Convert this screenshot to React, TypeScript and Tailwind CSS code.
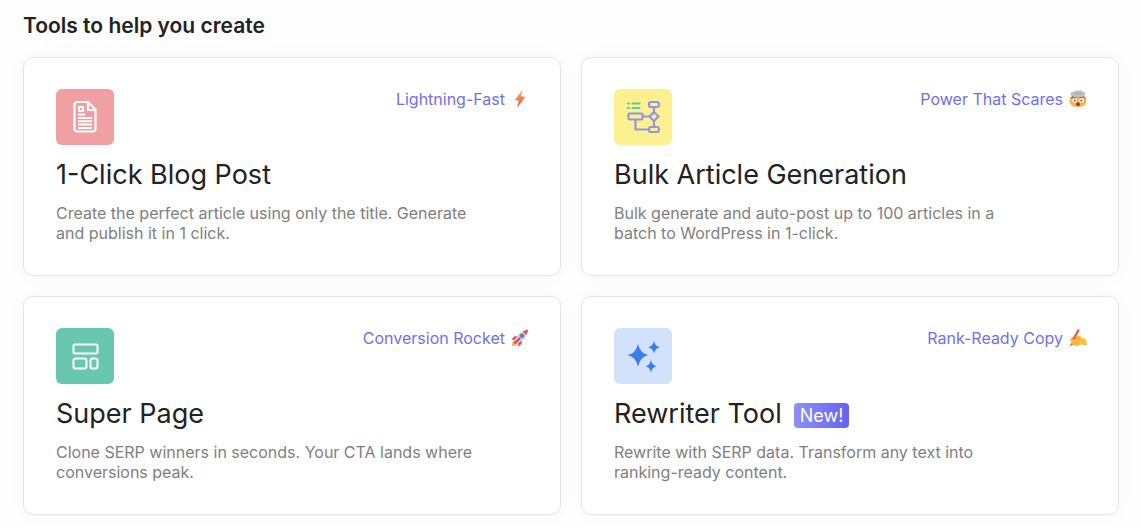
import { FC, ReactNode } from 'react';

type Tool = {
    title: string
    text: string
    tag: string
    color: string
    icon: ReactNode
    emoji: ReactNode
    isNew?: boolean
}

const PostIcon: FC = () => (
    <svg width="26" height="34" viewBox="0 0 26 34" fill="none" stroke="white">
        <path d="M4.500 2h11.500l7.500 7.500V29a2.500 2.500 0 0 1-2.500 2.500H5A2.500 2.500 0 0 1 2.500 29V4.500A2.500 2.500 0 0 1 4.500 2Z" strokeWidth="2.200" strokeLinejoin="round" />
        <path d="M16 3v7H22.500" strokeWidth="2.200" />
        <rect x="7" y="7" width="4" height="4" strokeWidth="2" />
        <path d="M6 14.500h7M6 18h14M6 21.300h14M6 24.600h14M6 28h14" strokeWidth="2" />
    </svg>
)

const FlowIcon: FC = () => (
    <svg width="34" height="34" viewBox="0 0 34 34" fill="none" strokeWidth="2.200">
        <path d="M2 3.500h1M2 8h1M6.500 3.500h7M6.500 8h7" stroke="#62c8a2" strokeLinecap="round" />
        <g stroke="#9493ec">
            <rect x="2.500" y="13.500" width="14" height="6" rx="1" />
            <rect x="23" y="2" width="10" height="5" rx="2" />
            <rect x="23" y="27" width="10" height="5" rx="2" />
            <path d="M28 12l4.500 4.500-4.500 4.500-4.500-4.500ZM28 7v5M28 21v6M16.500 16.500h7M9.500 19.500v10h13.500" strokeLinejoin="round" />
        </g>
    </svg>
)

const PageIcon: FC = () => (
    <svg width="28" height="28" viewBox="0 0 28 28" fill="none" stroke="white" strokeWidth="2">
        <rect x="2.500" y="2.500" width="24" height="9" rx="1" />
        <rect x="2.500" y="16.500" width="13" height="10" rx="2" />
        <rect x="19.500" y="16.500" width="7" height="10" rx="2" />
    </svg>
)

const SparklesIcon: FC = () => (
    <svg width="34" height="34" viewBox="0 0 34 34" fill="#397ceb">
        <path d="M12 5Q14 14.500 22.500 16Q14 18 12 27.500Q10 18 1.500 16Q10 14.500 12 5Z" />
        <path d="M28 2Q29 7.200 34 8.200Q29 9.200 28 14.500Q27 9.200 22 8.200Q27 7.200 28 2Z" />
        <path d="M25 21Q26 26.200 30.500 27.200Q26 28.200 25 33.500Q24 28.200 19.500 27.200Q24 26.200 25 21Z" />
    </svg>
)

const Bolt: FC = () => (
    <svg width="20" height="20" viewBox="0 0 20 20">
        <defs>
            <linearGradient id="bolt" x1="0" y1="0" x2="0" y2="1">
                <stop stopColor="#f8ad63" />
                <stop offset=".5" stopColor="#ec8050" />
                <stop offset="1" stopColor="#df5a54" />
            </linearGradient>
        </defs>
        <path d="M12.200 1.500 5.500 10.800l3.700.8L7.500 18 15 8.200l-4.200-.9Z" fill="url(#bolt)" stroke="url(#bolt)" strokeWidth=".6" strokeLinejoin="round" />
    </svg>
)

const MindBlown: FC = () => (
    <svg width="20" height="20" viewBox="0 0 20 20">
        <path d="M2 9Q10 6 18 9Q20 18 10 18Q0 18 2 9Z" fill="#f9b34a" />
        <path d="M2 9.500Q3.500 6.500 7 6.500h6Q16.500 6.500 18 9.500L15 8.500 12.500 9.300 10 8.300 7 9.300Z" fill="#a5684a" />
        <path d="M5.500 7.800Q3 7.300 2.500 5Q2.500 2.600 5 3Q7 .8 10 1.700Q13 .6 15 2.800Q17.500 2.800 17.300 5Q16.500 7.500 14.500 7.800Q10 9 5.500 7.800Z" fill="#c6bac6" />
        <path d="M6 4q2 2 4 .5t4 .5" fill="none" stroke="#b3a8b6" />
        <circle cx="6.500" cy="11.500" r="2.300" fill="white" />
        <circle cx="13.500" cy="11.500" r="2.300" fill="white" />
        <circle cx="6.700" cy="11.500" r=".9" fill="#5b3d3c" />
        <circle cx="13.300" cy="11.500" r=".9" fill="#5b3d3c" />
        <ellipse cx="10" cy="15.200" rx="1.900" ry="1.900" fill="#b32652" />
    </svg>
)

const Rocket: FC = () => (
    <svg width="20" height="20" viewBox="0 0 20 20">
        <path d="M8 8 4 8.500 1.500 12 6.500 11.500ZM12 12l-.5 4L8.500 18.500 8 14Z" fill="#e24763" />
        <path d="M5 12Q2 13 2 18Q7 18 8 15Z" fill="#f99a4b" />
        <path d="M5.500 13Q3.500 14 3 17Q6.500 16.500 7 14.500Z" fill="#fbd66a" />
        <path d="M5 12Q8 3.500 18 1.500Q17 11.500 8 15Z" fill="#d5cfdd" />
        <path d="M13 3.500Q15.500 2 18 1.500Q17.800 4.500 16.200 7Z" fill="#e64c5b" />
        <circle cx="12" cy="7.800" r="2.100" fill="#4b82c4" stroke="#8990a5" strokeWidth=".7" />
        <path d="M9.500 10.500 5 15" stroke="#bd456b" strokeWidth="1.800" strokeLinecap="round" />
    </svg>
)

const WritingHand: FC = () => (
    <svg width="20" height="20" viewBox="0 0 20 20">
        <path d="M2.500 10.500Q3.500 8.800 6 8.800L9 8Q12.500 7 13.500 10L16.500 10.500Q19 12 19 17Q16 17.500 13.500 16.500Q9 18.500 5 17.200Q3.500 16 4 14.500Q1.500 13 2.500 10.500Z" fill="#fac03e" />
        <path d="M10.300 2.500 5.500 11.500" stroke="#e8604f" strokeWidth="2.600" strokeLinecap="round" />
        <path d="M4.500 11.500h4.500q2 0 3-2.500M6 14.800h4.500" fill="none" stroke="#e69a35" strokeWidth=".8" />
        <path d="M4 11.500h4.500q1 2-1 2.500H4.500Q2.500 13.500 4 11.500Z" fill="#fac03e" />
        <path d="M1.500 18.200 3.500 14.800 5 16.500Z" fill="#d9584b" />
    </svg>
)

const tools: Tool[] = [
    {
        title: "1-Click Blog Post",
        text: "Create the perfect article using only the title. Generate and publish it in 1 click.",
        tag: "Lightning-Fast",
        color: "bg-[#f09fa2]",
        icon: <PostIcon />,
        emoji: <Bolt />,
    },
    {
        title: "Bulk Article Generation",
        text: "Bulk generate and auto-post up to 100 articles in a batch to WordPress in 1-click.",
        tag: "Power That Scares",
        color: "bg-[#fdf08e]",
        icon: <FlowIcon />,
        emoji: <MindBlown />,
    },
    {
        title: "Super Page",
        text: "Clone SERP winners in seconds. Your CTA lands where conversions peak.",
        tag: "Conversion Rocket",
        color: "bg-[#68c7ae]",
        icon: <PageIcon />,
        emoji: <Rocket />,
    },
    {
        title: "Rewriter Tool",
        text: "Rewrite with SERP data. Transform any text into ranking-ready content.",
        tag: "Rank-Ready Copy",
        color: "bg-[#d2e1fc]",
        icon: <SparklesIcon />,
        emoji: <WritingHand />,
        isNew: true,
    },
]

const ToolCard: FC<{ tool: Tool }> = ({ tool }) => {
    return (
        <a href="#" className="block rounded-[10px] border border-[#e5e5e5] bg-white pt-[31px] pr-[30px] pb-8 pl-8 shadow-[0_0_20px_rgba(0,0,0,0.03)]">
            <div className="flex items-start justify-between">
                <div className={`flex h-14 w-[58px] items-center justify-center rounded-md ${tool.color}`}>
                    {tool.icon}
                </div>
                <div className="flex items-center gap-[5px] text-base leading-5 text-[#716ff0]">
                    <span>{tool.tag}</span>
                    {tool.emoji}
                </div>
            </div>
            <div className="mt-2.5 flex items-center gap-3">
                <h2 className="text-[27px] leading-10 text-[#222222]">{tool.title}</h2>
                {tool.isNew && (
                    <span className="mt-0.5 rounded bg-gradient-to-r from-[#8e8ff8] to-[#6663f0] px-1.5 text-lg leading-[25px] text-white">New!</span>
                )}
            </div>
            <p className="mt-2 max-w-[425px] text-base leading-5 text-[#808080]">{tool.text}</p>
        </a>
    )
}

export default function App() {
    return (
        <main className="bg-[#fefefe] pt-3 pr-[21px] pb-3 pl-[23px] font-['Inter',sans-serif]">
            <h1 className="text-[21px] leading-7 font-semibold text-[#222222]">Tools to help you create</h1>
            <div className="mt-[17px] grid grid-cols-2 gap-5">
                {tools.map((tool) => (
                    <ToolCard key={tool.title} tool={tool} />
                ))}
            </div>
        </main>
    )
}
